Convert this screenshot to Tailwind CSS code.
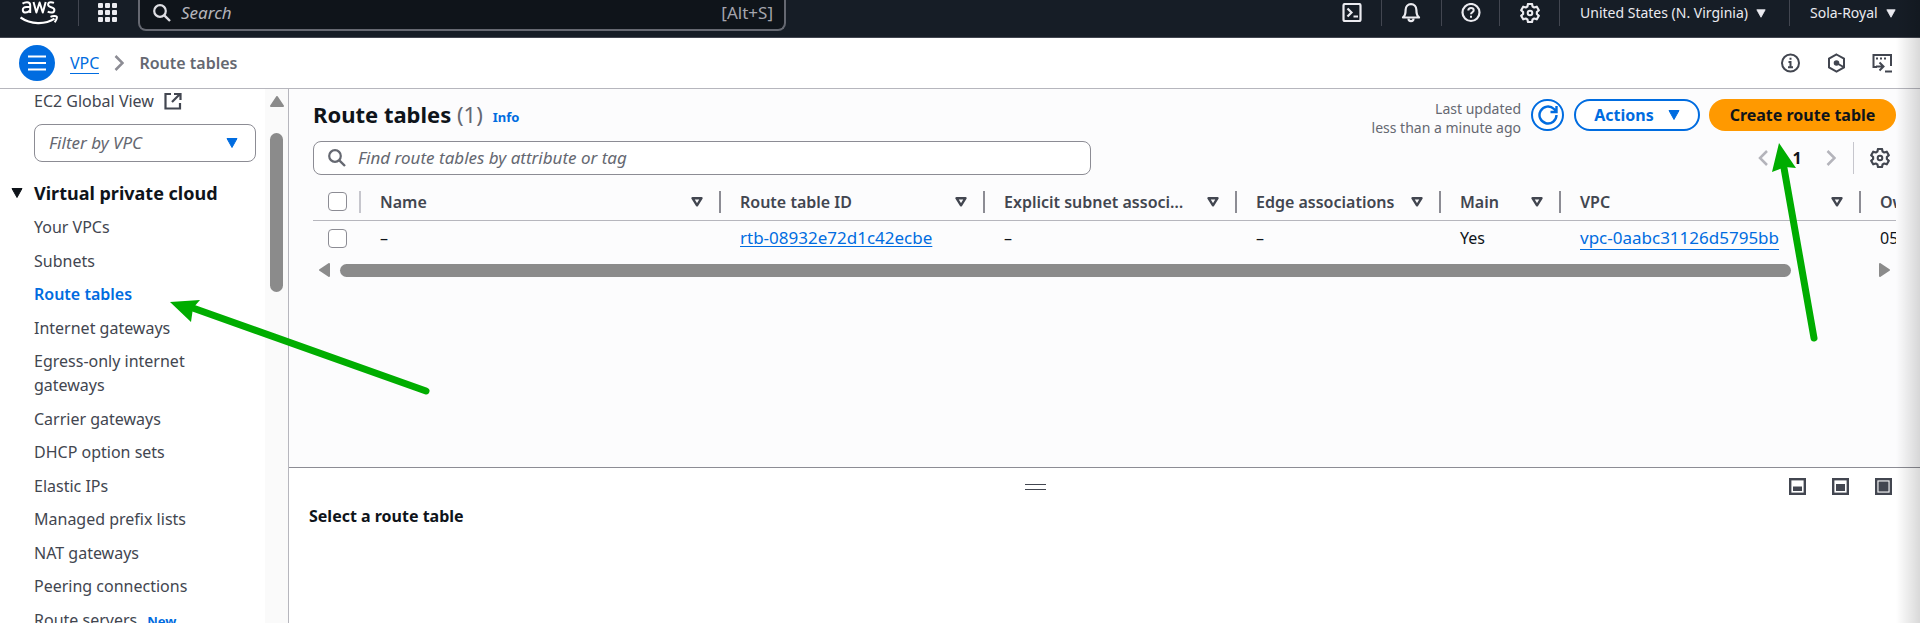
<!DOCTYPE html>
<html lang="en">
<head>
<meta charset="utf-8">
<title>Route tables | VPC Console</title>
<script src="https://cdn.jsdelivr.net/npm/@tailwindcss/browser@4"></script>
</head>
<body class="relative flex h-screen flex-col overflow-hidden bg-white font-['Noto_Sans',sans-serif] text-base leading-6 text-[#0f141a]">

<svg class="hidden" aria-hidden="true">
  <symbol id="gear" viewBox="0 0 20 20"><path d="M8 1h4l.6 2.6 1.6.9 2.6-.8 2 3.5-1.900 1.800v2l1.900 1.800-2 3.500-2.600-.8-1.600.9L12 19H8l-.6-2.600-1.600-.9-2.600.8-2-3.500L3.100 11V9L1.200 7.200l2-3.500 2.600.8 1.600-.9z" fill="none" stroke="currentColor" stroke-width="2.200" stroke-linejoin="round"/><circle cx="10" cy="10" r="2.300" fill="none" stroke="currentColor" stroke-width="2"/></symbol>
  <symbol id="search" viewBox="0 0 18 18"><circle cx="7" cy="7" r="5.800" fill="none" stroke="currentColor" stroke-width="2.200"/><path d="M11.300 11.300l5.700 5.700" stroke="currentColor" stroke-width="2.400"/></symbol>
  <symbol id="down" viewBox="0 0 12 10"><path d="M1 .5h10L6 9.500z" fill="currentColor" stroke="currentColor" stroke-linejoin="round"/></symbol>
  <symbol id="sort" viewBox="0 0 12 10"><path d="M1.500 1.200h9L6 8.300z" fill="none" stroke="currentColor" stroke-width="2.400" stroke-linejoin="round"/></symbol>
</svg>

<header class="flex h-[38px] shrink-0 items-start border-b border-[#424650] bg-[#161d26] text-white">
  <a href="#" aria-label="AWS home" class="flex h-[26px] w-[79px] items-start border-r border-[#424650] pl-5">
    <svg class="h-[26px] w-[39px]" viewBox="0 0 39 26" fill="none" stroke="#fff"><g stroke-width="2"><path d="M2.500 3.700c1.500-1 3-1.400 4.500-1.400 2.400 0 3.200 1.200 3.200 3v7.700M10.200 7H6.500c-2.400 0-3.700 1-3.700 2.900S4 12.500 5.700 12.500c2 0 3.300-1 4.500-2.400"/><path d="M13.500 2l2.900 10.500L19.600 2.500l3.200 10L25.700 2" stroke-linejoin="round"/><path d="M34 2.900c-1.300-.5-2.200-.6-3.200-.6-1.800 0-2.700.9-2.700 2.400 0 3.300 6.300 1.800 6.300 5.200 0 1.700-1.100 2.600-3.100 2.600-1.300 0-2.500-.3-3.600-.9"/></g><path d="M.5 17.500c10 7.200 25 7.200 34 1.200" stroke-width="2.200"/><path d="M30.500 16.800c2-1 5.500-1 6.300-.2.500 1-.6 4-2.200 5.600" stroke-width="2"/></svg>
  </a>
  <button aria-label="Services" class="ml-[18px] mt-[3px] h-5 w-5">
    <svg class="h-5 w-5" viewBox="0 0 20 20" fill="#ebebf0"><rect x="1" width="5" height="5" rx="1"/><rect x="8" width="5" height="5" rx="1"/><rect x="15" width="5" height="5" rx="1"/><rect x="1" y="7" width="5" height="5" rx="1"/><rect x="8" y="7" width="5" height="5" rx="1"/><rect x="15" y="7" width="5" height="5" rx="1"/><rect x="1" y="14" width="5" height="5" rx="1"/><rect x="8" y="14" width="5" height="5" rx="1"/><rect x="15" y="14" width="5" height="5" rx="1"/></svg>
  </button>
  <label class="ml-[21px] flex h-[31px] w-[648px] items-center rounded-b-lg border-2 border-t-0 border-[#656871] bg-[#0f141a] pb-1 pl-[13px] pr-[11px] text-[17px] text-[#b4b4bb]">
    <svg class="h-[18px] w-[18px] text-[#dedee3]"><use href="#search"/></svg>
    <input type="search" aria-label="Search" placeholder="Search" class="ml-2.5 min-w-0 flex-1 bg-transparent italic outline-none placeholder:text-[#b4b4bb]">
    <span class="text-[#a4a4ad]">[Alt+S]</span>
  </label>
  <nav class="ml-auto flex h-[26px] items-start text-sm text-[#ebebf0]">
    <button aria-label="CloudShell" class="flex h-[26px] w-[60px] justify-center border-r border-[#424650] pt-[3px]"><svg class="h-5 w-5" viewBox="0 0 20 20" fill="none" stroke="currentColor" stroke-width="2.200"><rect x="1.500" y="1" width="17" height="17" rx="1.500"/><path d="M5.500 5.500l4 4-4 4M11.500 13.500H16"/></svg></button>
    <button aria-label="Notifications" class="flex h-[26px] w-[60px] justify-center border-r border-[#424650] pr-0.5 pt-[3px]"><svg class="h-5 w-5" viewBox="0 0 20 20" fill="none" stroke="currentColor" stroke-width="2.200"><path d="M2 14.500c2-1.500 2.600-3.500 2.600-7.500C4.600 3.500 7 1.200 10 1.200S15.400 3.500 15.400 7c0 4 .6 6 2.600 7.500z" stroke-linejoin="round"/><path d="M7.500 15.500c0 3.500 5 3.500 5 0"/></svg></button>
    <button aria-label="Help" class="flex h-[26px] w-[58px] justify-center border-r border-[#424650] pt-[3px]"><svg class="h-5 w-5" viewBox="0 0 20 20" fill="none" stroke="currentColor" stroke-width="2.200"><circle cx="10" cy="9.500" r="8.500"/><path d="M7.300 7.500c0-1.600 1.200-2.500 2.700-2.500s2.700.9 2.700 2.300c0 2-2.700 1.900-2.700 4M10 12.800v2" stroke-width="2"/></svg></button>
    <button aria-label="Settings" class="flex h-[26px] w-[60px] justify-center border-r border-[#424650] pt-[3px]"><svg class="h-5 w-5"><use href="#gear"/></svg></button>
    <button class="flex h-[26px] w-[230px] items-center border-r border-[#424650] pl-5">United States (N. Virginia)<svg class="ml-2 h-[9px] w-2.5"><use href="#down"/></svg></button>
    <button class="flex h-[26px] w-[130px] items-center pl-5">Sola-Royal<svg class="ml-2 h-[9px] w-2.5"><use href="#down"/></svg></button>
  </nav>
</header>

<div class="flex h-[51px] shrink-0 items-center border-b border-[#b6b6bd] pl-[19px] pr-7 text-[#424650]">
  <button aria-label="Toggle navigation" class="flex h-9 w-9 items-center justify-center rounded-full bg-[#006ce0]"><svg class="h-4 w-[18px]" viewBox="0 0 18 16" stroke="#fff" stroke-width="2"><path d="M0 1.500h18M0 8h18M0 14.500h18"/></svg></button>
  <nav aria-label="Breadcrumb" class="ml-[15px] flex items-center">
    <a href="#" class="border-b border-[#006ce0] leading-5 text-[#006ce0]">VPC</a>
    <svg class="mx-[15px] h-4 w-2.5" viewBox="0 0 10 16" fill="none" stroke="#8c8c94" stroke-width="2.500"><path d="M1.500 1l7 7-7 7"/></svg>
    <span class="font-semibold text-[#656871]">Route tables</span>
  </nav>
  <div class="ml-auto flex gap-[26px]">
    <button aria-label="Info"><svg class="h-5 w-5" viewBox="0 0 20 20" fill="none" stroke="currentColor" stroke-width="2"><circle cx="10.500" cy="10" r="8.500"/><path d="M8.500 9h2v5M8 14.200h5M9.500 5.800h2"/></svg></button>
    <button aria-label="Recommendations"><svg class="h-5 w-5" viewBox="0 0 20 20" fill="none" stroke="currentColor" stroke-width="2"><path d="M10.500 1.500l7.500 4.200v8.600l-7.500 4.200-7.500-4.200V5.700z"/><circle cx="10.500" cy="10" r="1.800" fill="currentColor"/><path d="M10.500 10l7 4"/></svg></button>
    <button aria-label="Console to code"><svg class="h-5 w-5" viewBox="0 0 20 20" fill="none" stroke="currentColor" stroke-width="2"><path d="M5 14H1.500V2H19v11"/><path d="M4 5.500h2M8 5.500h2M12 5.500h2M4 13.500h7M7.500 9.500l4 4-4 4M13 18.500h7"/></svg></button>
  </div>
</div>

<div class="flex min-h-0 flex-1">
  <aside class="flex w-[289px] shrink-0 justify-between overflow-hidden border-r border-[#b6b6bd] text-[#424650]">
    <div class="w-[222px] ml-[34px]">
      <a href="#" class="flex items-center whitespace-nowrap">EC2 Global View<svg class="ml-2.5 h-[18px] w-[18px]" viewBox="0 0 18 18" fill="none" stroke="currentColor" stroke-width="2.200"><path d="M7 2H1.500v14.500H16V11M10 2h6.500v6M16 2L8 10"/></svg></a>
      <div class="relative mt-[11px]">
        <select aria-label="Filter by VPC" class="h-[38px] w-full appearance-none rounded-lg border border-[#8c8c94] bg-white px-3.5 text-[17px] italic text-[#656871]"><option>Filter by VPC</option></select>
        <svg class="pointer-events-none absolute right-[18px] top-3.5 h-2.5 w-3 text-[#006ce0]"><use href="#down"/></svg>
      </div>
      <button class="-ml-[23px] mt-[19px] flex items-center whitespace-nowrap text-lg font-bold leading-6 text-[#0f141a]"><svg class="mr-[11px] h-2.5 w-3"><use href="#down"/></svg>Virtual private cloud</button>
      <ul class="mt-2.5 *:odd:mb-2.5 *:even:mb-[9px]">
        <li><a href="#">Your VPCs</a></li>
        <li><a href="#">Subnets</a></li>
        <li><a href="#" class="font-semibold text-[#006ce0]">Route tables</a></li>
        <li><a href="#">Internet gateways</a></li>
        <li><a href="#">Egress-only internet<br>gateways</a></li>
        <li><a href="#">Carrier gateways</a></li>
        <li><a href="#">DHCP option sets</a></li>
        <li><a href="#">Elastic IPs</a></li>
        <li><a href="#">Managed prefix lists</a></li>
        <li><a href="#">NAT gateways</a></li>
        <li><a href="#">Peering connections</a></li>
        <li><a href="#">Route servers</a><span class="ml-2.5 text-[13px] font-bold text-[#006ce0]">New</span></li>
      </ul>
    </div>
    <div class="flex w-[23px] flex-col items-center bg-[#fafafa] pt-[7px]">
      <svg class="h-[11px] w-[14px]" viewBox="0 0 14 11"><path d="M7 1l6 9H1z" fill="#8b8b8b" stroke="#8b8b8b" stroke-width="2" stroke-linejoin="round"/></svg>
      <div class="mt-[26px] h-[159px] w-[13px] rounded-full bg-[#8b8b8b]"></div>
    </div>
  </aside>

  <main class="flex min-w-0 flex-1 flex-col">
    <section class="min-h-0 flex-1 overflow-hidden bg-[#fcfcfd] pl-6 pr-6 pt-2.5">
      <div class="flex h-8 items-start">
        <h1 class="text-[22px] font-bold leading-[30px]">Route tables <span class="font-normal text-[#656871]">(1)</span></h1>
        <a href="#" class="ml-2.5 mt-1.5 text-[13px] font-bold leading-6 text-[#006ce0]">Info</a>
        <p class="ml-auto text-right text-sm leading-[19px] text-[#656871]">Last updated<br>less than a minute ago</p>
        <button aria-label="Refresh" class="ml-2.5 flex h-8 w-[33px] items-center justify-center rounded-full border-2 border-[#006ce0] bg-white text-[#006ce0]"><svg class="h-5 w-5" viewBox="0 0 20 20" fill="none" stroke="currentColor" stroke-width="2.400"><path d="M18.500 10a8.500 8.500 0 1 1-2.500-6l2 2M18.500 1v6h-6"/></svg></button>
        <button class="ml-2.5 flex h-8 w-[126px] items-center justify-center gap-3.5 rounded-full border-2 border-[#006ce0] bg-white font-bold text-[#006ce0]">Actions<svg class="h-2.5 w-3"><use href="#down"/></svg></button>
        <button class="ml-[9px] h-8 w-[187px] rounded-full bg-[#ff9900] font-bold">Create route table</button>
      </div>
      <div class="mt-2.5 flex items-center">
        <label class="flex h-[34px] w-[778px] items-center rounded-lg border border-[#8c8c94] bg-white pl-3.5 text-[17px] text-[#656871]">
          <svg class="h-[18px] w-[18px]"><use href="#search"/></svg>
          <input type="search" aria-label="Find route tables" placeholder="Find route tables by attribute or tag" class="ml-3 min-w-0 flex-1 bg-transparent italic outline-none placeholder:text-[#656871]">
        </label>
        <div class="ml-auto flex items-center">
          <button aria-label="Previous page"><svg class="h-4 w-2.5" viewBox="0 0 10 16" fill="none" stroke="#b4b4bb" stroke-width="2.500"><path d="M9 1L2 8l7 7"/></svg></button>
          <button class="ml-6 w-2.5 font-bold">1</button>
          <button aria-label="Next page" class="ml-6"><svg class="h-4 w-2.5" viewBox="0 0 10 16" fill="none" stroke="#b4b4bb" stroke-width="2.500"><path d="M1.500 1l7 7-7 7"/></svg></button>
          <span class="ml-[17px] h-8 w-px bg-[#c6c6cd]"></span>
          <button aria-label="Preferences" class="ml-4 mr-[6px] text-[#424650]"><svg class="h-5 w-5"><use href="#gear"/></svg></button>
        </div>
      </div>

      <div class="mt-[9px] overflow-hidden">
        <table class="w-[1700px] table-fixed border-collapse text-left">
          <colgroup><col class="w-12"><col class="w-[360px]"><col class="w-[264px]"><col class="w-[252px]"><col class="w-[204px]"><col class="w-[120px]"><col class="w-[300px]"><col></colgroup>
          <thead class="text-[#424650]">
            <tr class="h-[36px] border-b border-[#b6b6bd]">
              <th class="p-0"><div class="flex h-[22px] items-center border-r-2 border-[#c6c6cd] pl-[15px]"><input type="checkbox" aria-label="Select all" class="h-[19px] w-[19px] appearance-none rounded border border-[#8c8c94] bg-white"></div></th>
              <th class="p-0"><div class="flex h-[22px] items-center justify-between border-r-2 border-[#8c8c94] pl-[19px] pr-4 font-semibold">Name<svg class="h-2.5 w-3"><use href="#sort"/></svg></div></th>
              <th class="p-0"><div class="flex h-[22px] items-center justify-between border-r-2 border-[#8c8c94] pl-[19px] pr-4 font-semibold">Route table ID<svg class="h-2.5 w-3"><use href="#sort"/></svg></div></th>
              <th class="p-0"><div class="flex h-[22px] items-center justify-between gap-[18px] border-r-2 border-[#8c8c94] pl-[19px] pr-4 font-semibold"><span class="truncate">Explicit subnet associations</span><svg class="h-2.5 w-3 shrink-0"><use href="#sort"/></svg></div></th>
              <th class="p-0"><div class="flex h-[22px] items-center justify-between whitespace-nowrap border-r-2 border-[#8c8c94] pl-[19px] pr-4 font-semibold">Edge associations<svg class="h-2.5 w-3"><use href="#sort"/></svg></div></th>
              <th class="p-0"><div class="flex h-[22px] items-center justify-between border-r-2 border-[#8c8c94] pl-[19px] pr-4 font-semibold">Main<svg class="h-2.5 w-3"><use href="#sort"/></svg></div></th>
              <th class="p-0"><div class="flex h-[22px] items-center justify-between border-r-2 border-[#8c8c94] pl-[19px] pr-4 font-semibold">VPC<svg class="h-2.5 w-3"><use href="#sort"/></svg></div></th>
              <th class="p-0 pl-[19px] font-semibold">Owner ID</th>
            </tr>
          </thead>
          <tbody>
            <tr class="h-9">
              <td class="p-0 pl-[15px]"><input type="checkbox" aria-label="Select rtb-08932e72d1c42ecbe" class="block h-[19px] w-[19px] appearance-none rounded border border-[#8c8c94] bg-white"></td>
              <td class="p-0 pl-[19px]">–</td>
              <td class="p-0 pl-[19px] text-[17px]"><a href="#" class="text-[#006ce0] underline underline-offset-2">rtb-08932e72d1c42ecbe</a></td>
              <td class="p-0 pl-[19px]">–</td>
              <td class="p-0 pl-[19px]">–</td>
              <td class="p-0 pl-[19px]">Yes</td>
              <td class="p-0 pl-[19px] text-[17px]"><a href="#" class="text-[#006ce0] underline decoration-1 underline-offset-5">vpc-0aabc31126d5795bb</a></td>
              <td class="p-0 pl-[19px]">0534</td>
            </tr>
          </tbody>
        </table>
      </div>
      <div class="mt-[7px] flex items-center pl-1.5 pr-[6px]">
        <svg class="h-[14px] w-[11px]" viewBox="0 0 11 14"><path d="M1 7l9-6v12z" fill="#8b8b8b" stroke="#8b8b8b" stroke-width="2" stroke-linejoin="round"/></svg>
        <div class="ml-2.5 mr-[88px] h-[13px] flex-1 rounded-full bg-[#8b8b8b]"></div>
        <svg class="h-[14px] w-[11px]" viewBox="0 0 11 14"><path d="M10 7L1 1v12z" fill="#8b8b8b" stroke="#8b8b8b" stroke-width="2" stroke-linejoin="round"/></svg>
      </div>
    </section>

    <section class="h-39 shrink-0 border-t border-[#8c8c94] pl-5 pr-7 pt-2.5">
      <div class="grid grid-cols-3 items-center">
        <span></span>
        <button aria-label="Resize panel" class="ml-[188px] h-1.5 w-[21px] border-y border-[#424650]"></button>
        <div class="flex justify-end gap-[26px] text-[#424650]">
          <button aria-label="Panel small"><svg class="h-[17px] w-[17px]" viewBox="0 0 17 17"><rect x="1.200" y="1.200" width="14.600" height="14.600" fill="none" stroke="currentColor" stroke-width="2.400"/><path d="M4 8.500h9V13H4z" fill="currentColor"/></svg></button>
          <button aria-label="Panel medium"><svg class="h-[17px] w-[17px]" viewBox="0 0 17 17"><rect x="1.200" y="1.200" width="14.600" height="14.600" fill="none" stroke="currentColor" stroke-width="2.400"/><path d="M4 6h9v7H4z" fill="currentColor"/></svg></button>
          <button aria-label="Panel full"><svg class="h-[17px] w-[17px]" viewBox="0 0 17 17"><rect x="1.200" y="1.200" width="14.600" height="14.600" fill="none" stroke="currentColor" stroke-width="2.400"/><path d="M3.500 3.500h10v10h-10z" fill="currentColor"/></svg></button>
        </div>
      </div>
      <h2 class="mt-[9px] font-bold">Select a route table</h2>
    </section>
  </main>
</div>

<div class="pointer-events-none absolute inset-y-0 right-0 w-6 bg-linear-to-r from-transparent to-black/15"></div>

<svg class="pointer-events-none absolute left-[160px] top-[290px] h-[110px] w-[280px]" viewBox="160 290 280 110" fill="#00ad00"><path d="M190 307L426 391" stroke="#00ad00" stroke-width="7" stroke-linecap="round"/><path d="M170 302l30-2-7 8-2 14z"/></svg>
<svg class="pointer-events-none absolute right-[90px] top-[140px] h-[210px] w-[60px]" viewBox="1770 140 60 210" fill="#00ad00"><path d="M1784 168L1814 338" stroke="#00ad00" stroke-width="7" stroke-linecap="round"/><path d="M1779 143l17 25-11-1-13 5z"/></svg>
</body>
</html>
